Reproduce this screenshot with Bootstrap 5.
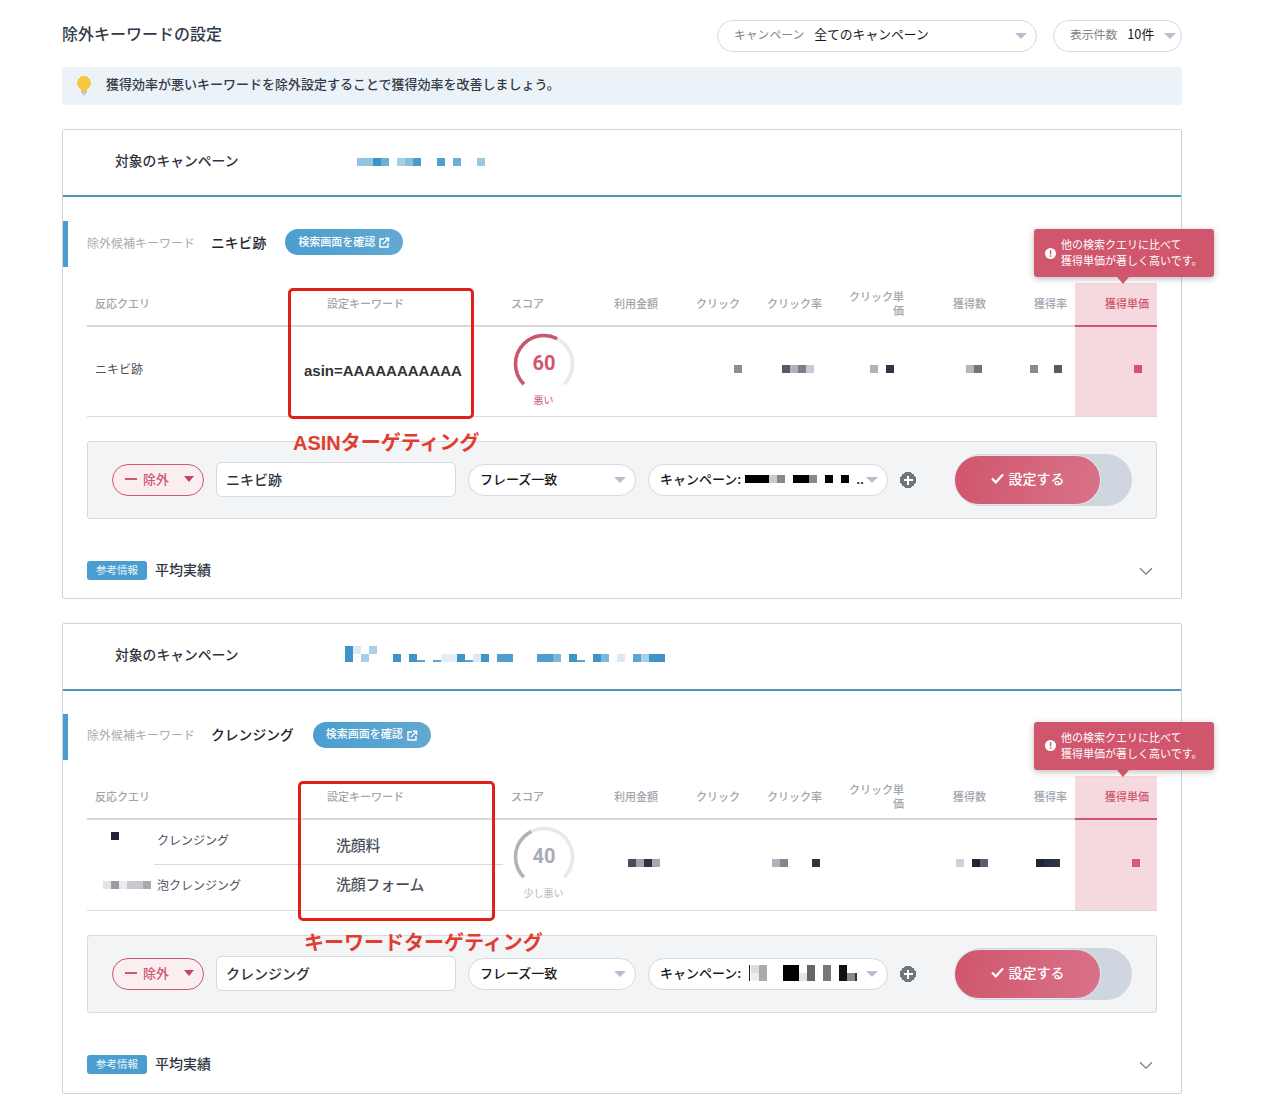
<!DOCTYPE html>
<html lang="ja">
<head>
<meta charset="utf-8">
<title>除外キーワードの設定</title>
<link href="https://cdn.jsdelivr.net/npm/bootstrap@5.3.0/dist/css/bootstrap.min.css" rel="stylesheet">
<style>
body{font-family:"Noto Sans CJK JP","Noto Sans",sans-serif;color:#2e3543;background:#fff;font-size:13px}
.sheet{width:1120px;margin-left:62px;padding:20px 0 24px}
.page-ttl{font-size:16px;font-weight:500;line-height:26px;margin:0 0 6px;color:#333a47}
.pick{height:32px;border:1px solid #d3dae2;background:#fff;color:#16191f;white-space:nowrap}
.pick-top{padding-left:16px;padding-right:9px;gap:10px;font-size:12.8px}
.pick-top>span:not(.tri){padding-bottom:4px}
.pick-top .lbl{font-size:11.8px;color:#7d838c}
.w-camp{width:320px}.w-num{width:129px}
.tri{display:inline-block;width:0;height:0;border-left:6px solid transparent;border-right:6px solid transparent;border-top:6px solid #b7c0ce;flex:none}
.tipbar{height:38px;background:#ebf3f9;border-radius:3px;margin:15px 0 24px;padding-left:13px;gap:13px;font-size:13px;font-weight:500;color:#333a47}
.tipbar span{padding-bottom:4px}
.kcard{border:1px solid #ccd5dc;border-radius:2px;margin-bottom:24px;background:#fff}
.kcard-head{height:67px;border-bottom:2px solid #4f97b8;padding:0 0 4px 52px;background:#fff}
.kcard-head .lbl{width:230px;font-size:13.8px;font-weight:500;color:#2e3543}
.mz{display:block;flex:none;shape-rendering:crispEdges}
.kw-row{height:46px;margin-top:24px;border-left:5px solid #4a9ecf;padding-left:19px;gap:16px}
.kcard-b .kw-row{margin-top:23px}
.kw-lbl{font-size:12px;color:#a6abb2;padding-bottom:3px}
.kw-val{font-size:13.8px;font-weight:500;color:#1e2430;margin-right:3px;padding-bottom:4px}
.look-btn{height:26px;padding:0 13px 2px;gap:4px;font-size:11px;font-weight:500;color:#fff;background:linear-gradient(90deg,#4a9ecf,#62a9d1);border:0;white-space:nowrap;margin-bottom:4px}
.look-btn:hover{color:#fff}
.look-btn svg{margin-top:3px}
.tbl-wrap{position:relative;margin:16px 24px 0}
.kwtable{table-layout:fixed;width:1070px;margin:0;border-bottom:1px solid #d5dae0}
.kwtable th{height:43px;padding:0 8px 2px;font-size:11px;font-weight:500;line-height:14px;color:#a0a5ad;vertical-align:middle;border-bottom:2px solid #d5dae0}
.kwtable td{padding:0;vertical-align:middle;font-size:12px;color:#4a505c}
.kwtable .ra{text-align:right}
.kwtable th.hot{color:#cf566c;border-bottom-color:#cf566c;background-color:#f5d9de}
.kwtable td.hot{background-color:#f5d9de}
.kwtable .nudge{padding-bottom:4px}
.single td{height:90px}
.dbl td{height:45px}
.qtext{padding-left:8px}
.asin{font-family:"Liberation Sans",Arial,sans-serif;font-weight:700;font-size:15px;color:#333;margin-left:-15px;white-space:nowrap}
.qrow{display:flex;align-items:center;height:45px}
.qrow-low{padding-bottom:4px}
.qname{flex:1;align-self:stretch;display:flex;align-items:center;padding:0 0 3px 3px;border-bottom:1px solid #d5dae0}
.qname-last{border-bottom:0;padding-bottom:0}
.kwtable td.kwname{padding-left:17px;font-size:14.8px;font-weight:500;color:#4a505c;padding-bottom:7px}
.kwtable td.kwname-first{border-bottom:1px solid #d5dae0;padding-bottom:0;padding-top:7px}
.kwtable td.gauge-cell{vertical-align:top;padding-top:6px;text-align:center}
.gauge{display:block;margin:0 auto}
.gauge text{font-family:Roboto,"Liberation Sans",sans-serif;font-weight:700;font-size:20px}
.gauge-lbl{font-size:10px;line-height:14px}
.kwtable .tone-bad{color:#cf566c}
.kwtable .tone-mid{color:#b5b8be}
.hintbox{position:absolute;left:947px;top:-54px;width:180px;height:48px;background:#cf566c;border-radius:3px;color:#fff;box-shadow:0 2px 6px rgba(60,30,40,.3);font-size:11px;line-height:16px;padding-left:11px;gap:5px;z-index:3;white-space:nowrap}
.hintbox div{padding-bottom:2px}
.hintbox::after{content:"";position:absolute;left:83px;top:100%;border-left:6px solid transparent;border-right:6px solid transparent;border-top:7px solid #cf566c}
.mark-box{position:absolute;border:3px solid #e0201a;border-radius:5px;z-index:4;pointer-events:none}
.mark-a{left:201px;top:5px;width:186px;height:131px}
.mark-b{left:211px;top:5px;width:197px;height:140px}
.mark-txt{position:absolute;z-index:4;font-family:"Liberation Sans","Noto Sans CJK JP",sans-serif;font-weight:700;font-size:20px;line-height:24px;color:#e23c30;white-space:nowrap}
.txt-a{left:206px;top:148px}
.txt-b{left:217px;top:155px}
.actbar{margin:24px 24px 0;height:78px;background:#f2f4f6;border:1px solid #d5dae0;border-radius:3px;padding:0 24px;gap:12px}
.excl{width:92px;height:32px;border:1px solid #cf566c;background:#fbeef0;color:#cf566c;font-size:13px;font-weight:500;padding:0 9px 2px 12px}
.excl .tri{border-top-color:#c4455e;margin-left:auto;border-left-width:5.5px;border-right-width:5.5px}
.dash{width:12px;height:2px;background:#cf566c;margin-right:6px}
.txtbox{width:240px;height:35px;border:1px solid #d3dae2;border-radius:6px;background:#fff;padding:0 9px;font-size:14px;font-weight:500;color:#2e3543}
.pick-form{padding:0 9px 2px 11px;font-size:13px;font-weight:500}
.pick-form .tri{margin-left:auto;margin-top:2px}
.w-match{width:168px}.w-target{width:240px}
.dots{margin-left:7px;color:#111}
.go-track{width:177px;height:52px;background:#cfd6e0;margin-left:27px;flex:none}
.go-btn{width:145px;height:48px;background:linear-gradient(100deg,#d0566c,#d8728a);color:#fff;border:0;font-size:14px;font-weight:500;gap:5px;box-shadow:0 0 0 1px #e3e6ea;padding:0 0 2px}
.go-btn:hover{color:#fff}
.foot-row{margin:42px 24px 0;height:19px;padding-right:4px;margin-bottom:18px;gap:8px}
.kcard-b .foot-row{margin-bottom:19px}
.ref-tag{height:19px;width:60px;background:#4a9ecf;color:#e9f4fa;font-size:10.5px;border-radius:3px;padding-bottom:1px}
.foot-ttl{font-size:14px;font-weight:500;color:#2e3543;padding-bottom:2px}
.foot-row svg{margin-top:2px}
</style>
</head>
<body>
<main class="sheet">
  <div class="d-flex align-items-start">
    <h1 class="page-ttl">除外キーワードの設定</h1>
    <div class="ms-auto d-flex gap-3">
      <div class="pick pick-top w-camp rounded-pill d-flex align-items-center"><span class="lbl">キャンペーン</span><span>全てのキャンペーン</span><span class="tri ms-auto"></span></div>
      <div class="pick pick-top w-num rounded-pill d-flex align-items-center"><span class="lbl">表示件数</span><span>10件</span><span class="tri ms-auto" ></span></div>
    </div>
  </div>
  <div class="tipbar d-flex align-items-center">
    <svg width="18" height="24" viewBox="0 0 18 24" class="mz"><g stroke="#f8e2ae" stroke-width="1"><path d="M0 9h1.2M16.8 9H18M1.6 3.4l1 1M16.4 3.4l-1 1M9 0v1"/></g><path d="M9 2a6.8 6.8 0 0 0-3.9 12.4c.8.6 1.2 1.3 1.2 2.3h5.4c0-1 .4-1.7 1.2-2.3A6.8 6.8 0 0 0 9 2z" fill="#f8c63f"/><rect x="6.4" y="17.2" width="5.2" height="1.5" fill="#bfc4ca"/><rect x="6.8" y="19.2" width="4.4" height="1.4" fill="#cfd3d8"/><rect x="7.8" y="21" width="2.4" height="1" fill="#d9dce0"/></svg>
    <span>獲得効率が悪いキーワードを除外設定することで獲得効率を改善しましょう。</span>
  </div>

  <section class="card kcard">
    <div class="kcard-head d-flex align-items-center">
      <span class="lbl">対象のキャンペーン</span>
      <svg class="mz" width="330" height="20"><g transform="translate(12 7)"><rect width="16" height="8" fill="#90c4e0"/><rect x="16" width="8" height="8" fill="#3f94c8"/><rect x="24" width="8" height="8" fill="#6eafd6"/><rect x="40" width="8" height="8" fill="#a9d0e6"/><rect x="48" width="8" height="8" fill="#8ac0de"/><rect x="56" width="8" height="8" fill="#4a9ccc"/><rect x="80" width="8" height="8" fill="#4f9fce"/><rect x="96" width="8" height="8" fill="#6fb0d8"/><rect x="120" width="8" height="8" fill="#98c8e2"/></g></svg>
    </div>
    <div class="kw-row d-flex align-items-center">
      <span class="kw-lbl">除外候補キーワード</span>
      <span class="kw-val">ニキビ跡</span>
      <a class="look-btn btn rounded-pill d-flex align-items-center" href="#">検索画面を確認<svg width="11" height="11" viewBox="0 0 11 11" fill="none" stroke="#fff" stroke-width="1.4"><path d="M5 2H1v8h8V6"/><path d="M4 7l5-5M6 1.2h3.6v3.6" /></svg></a>
    </div>
    <div class="tbl-wrap">
      <table class="table table-borderless kwtable single">
        <colgroup><col style="width:232px"><col style="width:184px"><col style="width:81px"><col style="width:82px"><col style="width:82px"><col style="width:82px"><col style="width:82px"><col style="width:82px"><col style="width:81px"><col style="width:82px"></colgroup>
        <thead><tr><th>反応クエリ</th><th>設定キーワード</th><th>スコア</th><th class="ra">利用金額</th><th class="ra">クリック</th><th class="ra">クリック率</th><th class="ra">クリック単<br>価</th><th class="ra">獲得数</th><th class="ra">獲得率</th><th class="ra hot">獲得単価</th></tr></thead>
        <tbody><tr>
          <td class="nudge"><div class="qtext">ニキビ跡</div></td>
          <td><div class="asin">asin=AAAAAAAAAAA</div></td>
          <td class="gauge-cell">
            <svg class="gauge" width="64" height="60" viewBox="0 0 64 60"><circle cx="32" cy="31" r="28.5" fill="none" stroke="#e8e9eb" stroke-width="3.5" stroke-dasharray="134.3 179" transform="rotate(135 32 31)"/><circle cx="32" cy="31" r="28.5" fill="none" stroke="#c9566b" stroke-width="3.5" stroke-dasharray="80.6 179" transform="rotate(135 32 31)"/><text x="32" y="37" text-anchor="middle" fill="#cf566c">60</text></svg>
            <div class="gauge-lbl tone-bad">悪い</div>
          </td>
          <td class="nudge"></td>
          <td class="nudge"><svg class="mz" width="82" height="8"><rect x="68" width="8" height="8" fill="#8a8d97"/></svg></td>
          <td class="nudge"><svg class="mz" width="82" height="8"><rect x="34" width="8" height="8" fill="#555a68"/><rect x="42" width="8" height="8" fill="#b0b2b8"/><rect x="50" width="8" height="8" fill="#7c7f8a"/><rect x="58" width="8" height="8" fill="#c8cad0"/></svg></td>
          <td class="nudge"><svg class="mz" width="82" height="8"><rect x="40" width="8" height="8" fill="#b0b2b8"/><rect x="56" width="8" height="8" fill="#2e3445"/></svg></td>
          <td class="nudge"><svg class="mz" width="82" height="8"><rect x="54" width="8" height="8" fill="#b5b7bd"/><rect x="62" width="8" height="8" fill="#70747f"/></svg></td>
          <td class="nudge"><svg class="mz" width="81" height="8"><rect x="36" width="8" height="8" fill="#888b95"/><rect x="60" width="8" height="8" fill="#565b68"/></svg></td>
          <td class="nudge hot"><svg class="mz" width="82" height="8"><rect x="59" width="8" height="8" fill="#d2556d"/></svg></td>
        </tr></tbody>
      </table>
      <div class="hintbox d-flex align-items-center">
        <svg width="11" height="11" viewBox="0 0 11 11"><circle cx="5.5" cy="5.5" r="5.5" fill="#fff"/><rect x="4.8" y="2.2" width="1.5" height="4.2" fill="#cf566c"/><rect x="4.8" y="7.2" width="1.5" height="1.5" fill="#cf566c"/></svg>
        <div>他の検索クエリに比べて<br>獲得単価が著しく高いです。</div>
      </div>
      <div class="mark-box mark-a"></div>
      <div class="mark-txt txt-a">ASINターゲティング</div>
    </div>
    <div class="actbar d-flex align-items-center">
      <div class="excl rounded-pill d-flex align-items-center"><span class="dash"></span>除外<span class="tri"></span></div>
      <div class="txtbox d-flex align-items-center">ニキビ跡</div>
      <div class="pick pick-form w-match rounded-pill d-flex align-items-center">フレーズ一致<span class="tri"></span></div>
      <div class="pick pick-form w-target rounded-pill d-flex align-items-center">キャンペーン:<svg class="mz ms-1" width="104" height="8"><rect width="24" height="8" fill="#000"/><rect x="24" width="8" height="8" fill="#ccc"/><rect x="32" width="8" height="8" fill="#888"/><rect x="48" width="16" height="8" fill="#000"/><rect x="64" width="8" height="8" fill="#888"/><rect x="80" width="8" height="8" fill="#000"/><rect x="96" width="8" height="8" fill="#000"/></svg><span class="dots">..</span><span class="tri"></span></div>
      <svg width="16" height="16" viewBox="0 0 16 16" class="mz"><circle cx="8" cy="8" r="8" fill="#6f767e"/><path d="M8 3.5v9M3.5 8h9" stroke="#fff" stroke-width="2"/></svg>
      <div class="go-track rounded-pill d-flex align-items-center ms-auto">
        <button type="button" class="go-btn btn rounded-pill d-flex align-items-center justify-content-center"><svg width="13" height="11" viewBox="0 0 13 11" fill="none" stroke="#fff" stroke-width="2.2"><path d="M1 5.5l3.8 3.8L12 1.5"/></svg>設定する</button>
      </div>
    </div>
    <div class="foot-row d-flex align-items-center">
      <span class="ref-tag d-flex align-items-center justify-content-center">参考情報</span>
      <span class="foot-ttl">平均実績</span>
      <svg class="ms-auto" width="14" height="9" viewBox="0 0 14 9" fill="none" stroke="#767d86" stroke-width="1.3"><path d="M1 1.2l6 6 6-6"/></svg>
    </div>
  </section>

  <section class="card kcard kcard-b">
    <div class="kcard-head d-flex align-items-center">
      <span class="lbl">対象のキャンペーン</span>
      <svg class="mz" width="330" height="20"><g transform="translate(0 2)"><rect width="8" height="16" fill="#3f94c8"/><rect x="8" width="8" height="8" fill="#dbeaf4"/><rect x="24" width="8" height="8" fill="#a9d0e6"/><rect x="16" y="8" width="8" height="8" fill="#a9d0e6"/><rect x="48" y="8" width="8" height="8" fill="#3f94c8"/><rect x="64" y="8" width="8" height="8" fill="#3f94c8"/><rect x="72" y="14" width="8" height="2" fill="#5aa5d2"/><rect x="88" y="14" width="8" height="2" fill="#5aa5d2"/><rect x="96" y="8" width="16" height="8" fill="#e3eff7"/><rect x="112" y="8" width="8" height="8" fill="#3f94c8"/><rect x="120" y="14" width="8" height="2" fill="#5aa5d2"/><rect x="128" y="8" width="8" height="8" fill="#dbeaf4"/><rect x="136" y="8" width="8" height="8" fill="#3f94c8"/><rect x="152" y="8" width="16" height="8" fill="#4f9fce"/><rect x="192" y="8" width="16" height="8" fill="#4f9fce"/><rect x="208" y="8" width="8" height="8" fill="#7cb7da"/><rect x="224" y="8" width="8" height="8" fill="#3f94c8"/><rect x="232" y="14" width="8" height="2" fill="#5aa5d2"/><rect x="248" y="8" width="8" height="8" fill="#3f94c8"/><rect x="256" y="8" width="8" height="8" fill="#7cb7da"/><rect x="272" y="8" width="8" height="8" fill="#dbeaf4"/><rect x="288" y="8" width="8" height="8" fill="#5aa5d2"/><rect x="296" y="8" width="8" height="8" fill="#a9d0e6"/><rect x="304" y="8" width="16" height="8" fill="#3f94c8"/></g></svg>
    </div>
    <div class="kw-row d-flex align-items-center">
      <span class="kw-lbl">除外候補キーワード</span>
      <span class="kw-val">クレンジング</span>
      <a class="look-btn btn rounded-pill d-flex align-items-center" href="#">検索画面を確認<svg width="11" height="11" viewBox="0 0 11 11" fill="none" stroke="#fff" stroke-width="1.4"><path d="M5 2H1v8h8V6"/><path d="M4 7l5-5M6 1.2h3.6v3.6" /></svg></a>
    </div>
    <div class="tbl-wrap">
      <table class="table table-borderless kwtable dbl">
        <colgroup><col style="width:232px"><col style="width:184px"><col style="width:81px"><col style="width:82px"><col style="width:82px"><col style="width:82px"><col style="width:82px"><col style="width:82px"><col style="width:81px"><col style="width:82px"></colgroup>
        <thead><tr><th>反応クエリ</th><th>設定キーワード</th><th>スコア</th><th class="ra">利用金額</th><th class="ra">クリック</th><th class="ra">クリック率</th><th class="ra">クリック単<br>価</th><th class="ra">獲得数</th><th class="ra">獲得率</th><th class="ra hot">獲得単価</th></tr></thead>
        <tbody><tr>
          <td><div class="qrow"><svg class="mz" width="67" height="24"><rect x="24" y="2" width="8" height="8" fill="#1f2536"/></svg><div class="qname">クレンジング</div></div></td>
          <td class="kwname kwname-first">洗顔料</td>
          <td class="gauge-cell" rowspan="2">
            <svg class="gauge" width="64" height="60" viewBox="0 0 64 60"><circle cx="32" cy="31" r="28.5" fill="none" stroke="#e8e9eb" stroke-width="3.5" stroke-dasharray="134.3 179" transform="rotate(135 32 31)"/><circle cx="32" cy="31" r="28.5" fill="none" stroke="#b3b3b3" stroke-width="3.5" stroke-dasharray="53.7 179" transform="rotate(135 32 31)"/><text x="32" y="37" text-anchor="middle" fill="#a9acb2">40</text></svg>
            <div class="gauge-lbl tone-mid">少し悪い</div>
          </td>
          <td class="nudge" rowspan="2"><svg class="mz" width="82" height="8"><rect x="44" width="8" height="8" fill="#4a4f5e"/><rect x="52" width="8" height="8" fill="#a0a3ac"/><rect x="60" width="8" height="8" fill="#2e3445"/><rect x="68" width="8" height="8" fill="#a8aab2"/></svg></td>
          <td class="nudge" rowspan="2"></td>
          <td class="nudge" rowspan="2"><svg class="mz" width="82" height="8"><rect x="24" width="8" height="8" fill="#b0b3ba"/><rect x="32" width="8" height="8" fill="#83868f"/><rect x="64" width="8" height="8" fill="#2e3445"/></svg></td>
          <td class="nudge" rowspan="2"></td>
          <td class="nudge" rowspan="2"><svg class="mz" width="82" height="8"><rect x="44" width="8" height="8" fill="#cfd0d5"/><rect x="60" width="8" height="8" fill="#1f2536"/><rect x="68" width="8" height="8" fill="#5a5f6c"/></svg></td>
          <td class="nudge" rowspan="2"><svg class="mz" width="81" height="8"><rect x="42" width="8" height="8" fill="#1f2536"/><rect x="50" width="8" height="8" fill="#2a3042"/><rect x="58" width="8" height="8" fill="#2e3445"/></svg></td>
          <td class="nudge hot" rowspan="2"><svg class="mz" width="82" height="8"><rect x="57" width="8" height="8" fill="#cf5c72"/></svg></td>
        </tr><tr>
          <td><div class="qrow qrow-low"><svg class="mz" width="67" height="8"><rect x="16" width="8" height="8" fill="#e3e3e6"/><rect x="24" width="8" height="8" fill="#9a9ca3"/><rect x="32" width="8" height="8" fill="#ebebed"/><rect x="40" width="16" height="8" fill="#c8c9ce"/><rect x="56" width="8" height="8" fill="#a8aab0"/></svg><div class="qname qname-last">泡クレンジング</div></div></td>
          <td class="kwname">洗顔フォーム</td>
        </tr></tbody>
      </table>
      <div class="hintbox d-flex align-items-center">
        <svg width="11" height="11" viewBox="0 0 11 11"><circle cx="5.5" cy="5.5" r="5.5" fill="#fff"/><rect x="4.8" y="2.2" width="1.5" height="4.2" fill="#cf566c"/><rect x="4.8" y="7.2" width="1.5" height="1.5" fill="#cf566c"/></svg>
        <div>他の検索クエリに比べて<br>獲得単価が著しく高いです。</div>
      </div>
      <div class="mark-box mark-b"></div>
      <div class="mark-txt txt-b">キーワードターゲティング</div>
    </div>
    <div class="actbar d-flex align-items-center">
      <div class="excl rounded-pill d-flex align-items-center"><span class="dash"></span>除外<span class="tri"></span></div>
      <div class="txtbox d-flex align-items-center">クレンジング</div>
      <div class="pick pick-form w-match rounded-pill d-flex align-items-center">フレーズ一致<span class="tri"></span></div>
      <div class="pick pick-form w-target rounded-pill d-flex align-items-center">キャンペーン:<svg class="mz ms-1" width="112" height="16"><rect x="4" width="1" height="16" fill="#222"/><rect x="6" width="8" height="8" fill="#ddd"/><rect x="6" y="8" width="8" height="8" fill="#eee"/><rect x="14" width="8" height="16" fill="#aaa"/><rect x="38" width="16" height="16" fill="#000"/><rect x="54" y="8" width="8" height="8" fill="#e5e5e5"/><rect x="62" width="8" height="16" fill="#666"/><rect x="78" width="8" height="16" fill="#777"/><rect x="94" width="8" height="16" fill="#111"/><rect x="102" y="8" width="8" height="8" fill="#888"/><rect x="110" y="8" width="2" height="8" fill="#333"/></svg><span class="tri"></span></div>
      <svg width="16" height="16" viewBox="0 0 16 16" class="mz"><circle cx="8" cy="8" r="8" fill="#6f767e"/><path d="M8 3.5v9M3.5 8h9" stroke="#fff" stroke-width="2"/></svg>
      <div class="go-track rounded-pill d-flex align-items-center ms-auto">
        <button type="button" class="go-btn btn rounded-pill d-flex align-items-center justify-content-center"><svg width="13" height="11" viewBox="0 0 13 11" fill="none" stroke="#fff" stroke-width="2.2"><path d="M1 5.5l3.8 3.8L12 1.5"/></svg>設定する</button>
      </div>
    </div>
    <div class="foot-row d-flex align-items-center">
      <span class="ref-tag d-flex align-items-center justify-content-center">参考情報</span>
      <span class="foot-ttl">平均実績</span>
      <svg class="ms-auto" width="14" height="9" viewBox="0 0 14 9" fill="none" stroke="#767d86" stroke-width="1.3"><path d="M1 1.2l6 6 6-6"/></svg>
    </div>
  </section>
</main>
<script src="https://cdn.jsdelivr.net/npm/bootstrap@5.3.0/dist/js/bootstrap.bundle.min.js"></script>
</body>
</html>
